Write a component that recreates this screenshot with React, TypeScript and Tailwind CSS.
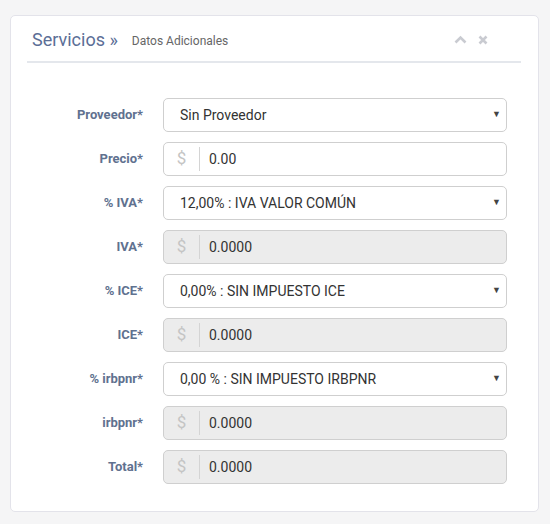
const rows: { label: string; kind: 'select' | 'money'; value: string; disabled?: boolean }[] = [
  { label: 'Proveedor*', kind: 'select', value: 'Sin Proveedor' },
  { label: 'Precio*', kind: 'money', value: '0.00' },
  { label: '% IVA*', kind: 'select', value: '12,00% : IVA VALOR COMÚN' },
  { label: 'IVA*', kind: 'money', value: '0.0000', disabled: true },
  { label: '% ICE*', kind: 'select', value: '0,00% : SIN IMPUESTO ICE' },
  { label: 'ICE*', kind: 'money', value: '0.0000', disabled: true },
  { label: '% irbpnr*', kind: 'select', value: '0,00 % : SIN IMPUESTO IRBPNR' },
  { label: 'irbpnr*', kind: 'money', value: '0.0000', disabled: true },
  { label: 'Total*', kind: 'money', value: '0.0000', disabled: true },
];

export default function App() {
  return (
    <div className="min-h-[524px] bg-[#f5f5f6] pl-[10px] pr-[11px] pt-[15px] font-['Roboto',sans-serif]">
      <div className="rounded-[5px] border border-[#e3e3ea] bg-white pl-[16px] pr-[17px] pb-[27px]">
        {/* header */}
        <div className="flex h-[47px] items-center border-b-2 border-[#e4e7ec] pl-[5px] pr-[33px]">
          <span className="mt-[2px] text-[18px] leading-none text-[#5b6e96]">Servicios »</span>
          <span className="ml-[14px] mt-[4px] text-[12px] text-[#666]">Datos Adicionales</span>
          <div className="ml-auto flex items-center gap-[11px] pt-[2px]">
            <svg width="13" height="9" viewBox="0 0 13 9">
              <path d="M1.5 7.5 L6.5 2.5 L11.5 7.5" fill="none" stroke="#c9cbd1" strokeWidth="2.6" />
            </svg>
            <svg width="10" height="10" viewBox="0 0 10 10">
              <path d="M1.5 1.5 L8.5 8.5 M8.5 1.5 L1.5 8.5" fill="none" stroke="#c9cbd1" strokeWidth="2.6" />
            </svg>
          </div>
        </div>

        {/* form */}
        <div className="mt-[35px] grid grid-cols-[116px_1fr] gap-x-[20px] gap-y-[10px] pr-[14px]">
          {rows.map((r) => (
            <div key={r.label} className="contents">
              <div className="flex h-[34px] items-center justify-end text-[13px] font-bold text-[#60718f]">
                {r.label}
              </div>
              {r.kind === 'select' ? (
                <div className="flex h-[34px] items-center rounded-[5px] border border-[#cfcfcf] bg-white pl-[16px] pr-[5px] text-[14px] text-[#333]">
                  <span>{r.value}</span>
                  <span className="ml-auto text-[9px] text-[#444]">▼</span>
                </div>
              ) : (
                <div
                  className={`flex h-[34px] items-center rounded-[5px] border border-[#cfcfcf] text-[14px] text-[#333] ${
                    r.disabled ? 'bg-[#ececec]' : 'bg-white'
                  }`}
                >
                  <span className="w-[35px] text-center text-[17px] text-[#c4c4c4]">$</span>
                  <span className="h-[24px] w-px bg-[#d4d4d4]" />
                  <span className="pl-[9px]">{r.value}</span>
                </div>
              )}
            </div>
          ))}
        </div>
      </div>
    </div>
  );
}
